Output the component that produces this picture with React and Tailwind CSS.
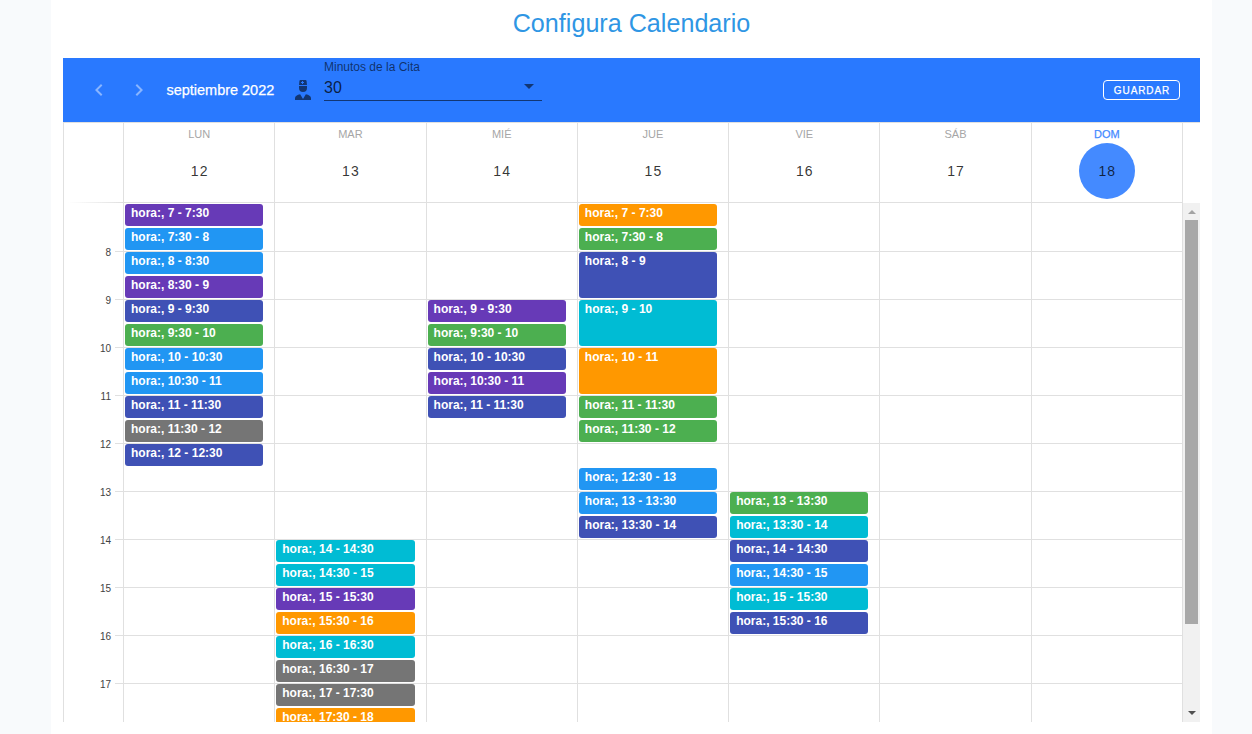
import React from "react";

const P = "bg-[#673ab7]";
const B = "bg-[#2196f3]";
const I = "bg-[#3f51b5]";
const G = "bg-[#4caf50]";
const X = "bg-[#757575]";
const C = "bg-[#00bcd4]";
const O = "bg-[#ff9800]";

const HOUR = 48;
const START = 7;

const days = [
  { name: "LUN", num: 12, events: [[7, 7.5, P], [7.5, 8, B], [8, 8.5, B], [8.5, 9, P], [9, 9.5, I], [9.5, 10, G], [10, 10.5, B], [10.5, 11, B], [11, 11.5, I], [11.5, 12, X], [12, 12.5, I]] },
  { name: "MAR", num: 13, events: [[14, 14.5, C], [14.5, 15, C], [15, 15.5, P], [15.5, 16, O], [16, 16.5, C], [16.5, 17, X], [17, 17.5, X], [17.5, 18, O]] },
  { name: "MIÉ", num: 14, events: [[9, 9.5, P], [9.5, 10, G], [10, 10.5, I], [10.5, 11, P], [11, 11.5, I]] },
  { name: "JUE", num: 15, events: [[7, 7.5, O], [7.5, 8, G], [8, 9, I], [9, 10, C], [10, 11, O], [11, 11.5, G], [11.5, 12, G], [12.5, 13, B], [13, 13.5, B], [13.5, 14, I]] },
  { name: "VIE", num: 16, events: [[13, 13.5, G], [13.5, 14, C], [14, 14.5, I], [14.5, 15, B], [15, 15.5, C], [15.5, 16, I]] },
  { name: "SÁB", num: 17, events: [] },
  { name: "DOM", num: 18, events: [], today: true },
];

const fmt = (t) => (t % 1 ? `${Math.floor(t)}:30` : `${t}`);

function Chevron({ d }) {
  return (
    <svg viewBox="0 0 24 24" className="size-6 fill-white/45">
      <path d={d} />
    </svg>
  );
}

function Toolbar() {
  return (
    <div className="flex h-16 items-center bg-[#2979ff] pl-6 pr-5">
      <button><Chevron d="M15.41 16.58 10.83 12l4.58-4.59L14 6l-6 6 6 6z" /></button>
      <button className="ml-4"><Chevron d="M8.59 16.58 13.17 12 8.59 7.41 10 6l6 6-6 6z" /></button>
      <div className="ml-[15.5px] w-[124.5px] whitespace-nowrap pt-px text-[14.5px] tracking-[-0.02px] text-white [-webkit-text-stroke:0.25px_white]">septiembre 2022</div>
      <svg viewBox="0 0 24 24" className="size-6 fill-black/55">
        <path d="M14.84,16.26C17.86,16.83 20,18.29 20,20V22H4V20C4,18.29 6.14,16.83 9.16,16.26L12,21L14.84,16.26M8,8H16V10A4,4 0 0,1 12,14A4,4 0 0,1 8,10V8M8,7L8.41,2.9C8.46,2.39 8.89,2 9.41,2H14.6C15.11,2 15.54,2.39 15.59,2.9L16,7H8M12,3H11V4H10V5H11V6H12V5H13V4H12V3Z" />
      </svg>
      <div className="ml-[9px] flex h-[43px] w-[218px] flex-col self-start border-b border-black/55">
        <div className="pt-[1px] text-[12px] leading-4 text-black/60">Minutos de la Cita</div>
        <div className="flex items-center justify-between pr-2">
          <span className="text-[16px] leading-[26px] text-black/75">30</span>
          <svg viewBox="0 0 10 5" className="mb-[3px] h-[5px] w-[10px] fill-black/55"><path d="M0 0h10L5 5z" /></svg>
        </div>
      </div>
      <button className="ml-auto flex h-5 w-[77px] items-center justify-center rounded border border-white pl-px text-[10px] tracking-[0.9px] text-white [-webkit-text-stroke:0.25px_white]">
        <span>GUARDAR</span>
      </button>
    </div>
  );
}

function DayHeader({ day }) {
  return (
    <div className="flex min-w-0 flex-1 flex-col items-center border-b border-r border-[#e0e0e0]">
      <div className={`pt-[3px] text-[11px] leading-[17px] ${day.today ? "text-[#448aff] [-webkit-text-stroke:0.25px_#448aff]" : "text-[#a6a6a6]"}`}>{day.name}</div>
      <div className={`flex size-14 items-center justify-center rounded-full pl-px text-[14px] tracking-[1.1px] ${day.today ? "bg-[#448aff] text-black/75" : "text-black/80"}`}>
        {day.num}
      </div>
    </div>
  );
}

function DayColumn({ day }) {
  let cursor = START;
  return (
    <div className="flex min-w-0 flex-1 flex-col border-r border-[#e0e0e0] bg-[repeating-linear-gradient(to_bottom,transparent_0px,transparent_47px,#e0e0e0_47px,#e0e0e0_48px)] bg-[position:0_1px] bg-no-repeat pt-px">
      {day.events.map(([from, to, color]) => {
        const gap = (from - cursor) * HOUR;
        cursor = to;
        return (
          <div
            key={from}
            className={`ml-px mr-[11px] shrink-0 overflow-hidden rounded-[3px] pl-1.5 text-[12px] font-bold leading-[18px] whitespace-nowrap text-white ${color}`}
            style={{ marginTop: gap, marginBottom: 2, height: (to - from) * HOUR - 2 }}
          >
            hora:, {fmt(from)} - {fmt(to)}
          </div>
        );
      })}
    </div>
  );
}

function Scrollbar() {
  return (
    <div className="flex w-[17px] shrink-0 flex-col items-center bg-[#f1f1f1]">
      <div className="flex h-[17px] items-center">
        <svg viewBox="0 0 8 4" className="h-1 w-2 fill-[#a3a3a3]"><path d="M0 4h8L4 0z" /></svg>
      </div>
      <div className="h-[404px] w-[13px] bg-[#a8a8a8]" />
      <div className="mb-px mt-auto flex h-[17px] items-center">
        <svg viewBox="0 0 8 4" className="h-1 w-2 fill-[#505050]"><path d="M0 0h8L4 4z" /></svg>
      </div>
    </div>
  );
}

export default function App() {
  return (
    <div className="h-[734px] overflow-hidden bg-[#f8fafc] pl-[51px] pr-10 font-['Liberation_Sans',Arial,sans-serif]">
      <div className="h-full bg-white px-3">
        <h1 className="h-[58px] pt-2 text-center text-[25.15px] leading-[30px] text-[#2f96e4]">Configura Calendario</h1>
        <Toolbar />
        <div className="flex h-[81px] border-l border-t border-[#e0e0e0]">
          <div className="flex w-[60px] shrink-0 items-end border-r border-[#e0e0e0] pl-1">
            <div className="h-px w-full bg-linear-to-r from-transparent to-[#e0e0e0]" />
          </div>
          {days.map((d) => <DayHeader key={d.num} day={d} />)}
          <div className="w-[17px] shrink-0" />
        </div>
        <div className="flex h-[519px] overflow-hidden border-l border-[#e0e0e0]">
          <div className="flex w-[60px] shrink-0 flex-col border-r border-[#e0e0e0] pt-[43px]">
            {[8, 9, 10, 11, 12, 13, 14, 15, 16, 17].map((h) => (
              <div key={h} className="flex h-12 shrink-0 items-start">
                <div className="w-[47px] text-right text-[10px] leading-[14px] text-[#424242]">{h}</div>
                <div className="ml-auto mt-[5px] h-px w-2 bg-[#e0e0e0]" />
              </div>
            ))}
          </div>
          <div className="flex h-[576px] min-w-0 flex-1">
            {days.map((d) => <DayColumn key={d.num} day={d} />)}
          </div>
          <Scrollbar />
        </div>
      </div>
    </div>
  );
}
